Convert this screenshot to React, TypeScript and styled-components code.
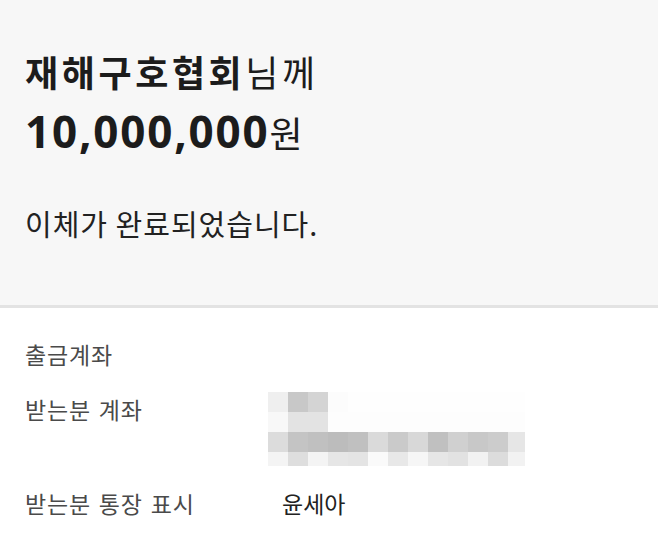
import React from "react";
import styled, { createGlobalStyle } from "styled-components";

const Global = createGlobalStyle`
  html, body { margin: 0; padding: 0; background: #ffffff; }
  body { font-family: "Noto Sans CJK KR", "Noto Sans", sans-serif; color: #1f1f1f; }
`;

const Page = styled.div`
  width: 658px;
  height: 540px;
  overflow: hidden;
  background: #ffffff;
`;

const Summary = styled.section`
  box-sizing: border-box;
  height: 308px;
  background: #f7f7f7;
  border-bottom: 3px solid #e3e3e3;
  padding: 41px 25px 0;
  display: flex;
  flex-direction: column;
`;

const Recipient = styled.div`
  font-size: 36px;
  line-height: 60px;
  letter-spacing: 3.6px;
  color: #1c1c1c;
`;

const Strong = styled.span`
  font-weight: 700;
`;

const Amount = styled.div`
  font-size: 36px;
  line-height: 60px;
  color: #1c1c1c;
`;

const Digits = styled.span`
  font-family: "Noto Sans", "Noto Sans CJK KR", sans-serif;
  font-weight: 700;
  font-size: 44px;
  letter-spacing: 1.8px;
`;

const Message = styled.div`
  margin-top: 41px;
  font-size: 29px;
  line-height: 40px;
  letter-spacing: 1px;
  color: #222222;
`;

const Details = styled.section`
  padding: 28px 25px 0;
  display: flex;
  flex-direction: column;
  gap: 19px;
`;

const Row = styled.div`
  display: grid;
  grid-template-columns: 257px 1fr;
  font-size: 23px;
  line-height: 36px;
`;

const Label = styled.div`
  color: #4a4a4a;
  letter-spacing: 0.8px;
  word-spacing: 2px;
`;

const Value = styled.div`
  color: #222222;
`;

const Mosaic = styled.svg`
  display: block;
  margin-left: -14px;
  margin-top: 1px;
`;

const mosaicRows: string[][] = [
  ["#efefef", "#c8c8c8", "#d4d4d4", "#fcfcfc", "#fefefe", "#fefefe", "#fefefe", "#fefefe", "#fefefe", "#fefefe", "#fefefe", "#fefefe", "#fefefe"],
  ["#f8f8f8", "#e3e3e3", "#e3e3e3", "#fdfdfd", "#fdfdfd", "#fdfdfd", "#fdfdfd", "#fdfdfd", "#fdfdfd", "#fdfdfd", "#fdfdfd", "#fdfdfd", "#fdfdfd"],
  ["#dcdcdc", "#c4c4c4", "#c0c0c0", "#bcbcbc", "#c0c0c0", "#dadada", "#cacaca", "#d8d8d8", "#c0c0c0", "#d0d0d0", "#c8c8c8", "#cccccc", "#e6e6e6"],
  ["#f4f4f4", "#dedede", "#f4f4f4", "#e6e6e6", "#e4e4e4", "#fafafa", "#e8e8e8", "#f6f6f6", "#e6e6e6", "#e2e2e2", "#f2f2f2", "#dcdcdc", "#f2f2f2"],
];

const rowHeights = [20, 20, 20, 14];

function Redacted() {
  let y = 0;
  return (
    <Mosaic width={257} height={74} viewBox="0 0 257 74">
      {mosaicRows.map((row, r) => {
        const top = y;
        y += rowHeights[r];
        return row.map((c, i) => (
          <rect
            key={`${r}-${i}`}
            x={i * 20}
            y={top}
            width={i === 12 ? 17 : 20}
            height={rowHeights[r]}
            fill={c}
          />
        ));
      })}
    </Mosaic>
  );
}

export default function App() {
  return (
    <Page>
      <Global />
      <Summary>
        <Recipient>
          <Strong>재해구호협회</Strong>님께
        </Recipient>
        <Amount>
          <Digits>10,000,000</Digits>원
        </Amount>
        <Message>이체가 완료되었습니다.</Message>
      </Summary>
      <Details>
        <Row>
          <Label>출금계좌</Label>
          <Value />
        </Row>
        <Row>
          <Label>받는분 계좌</Label>
          <Value>
            <Redacted />
          </Value>
        </Row>
        <Row>
          <Label>받는분 통장 표시</Label>
          <Value>윤세아</Value>
        </Row>
      </Details>
    </Page>
  );
}
